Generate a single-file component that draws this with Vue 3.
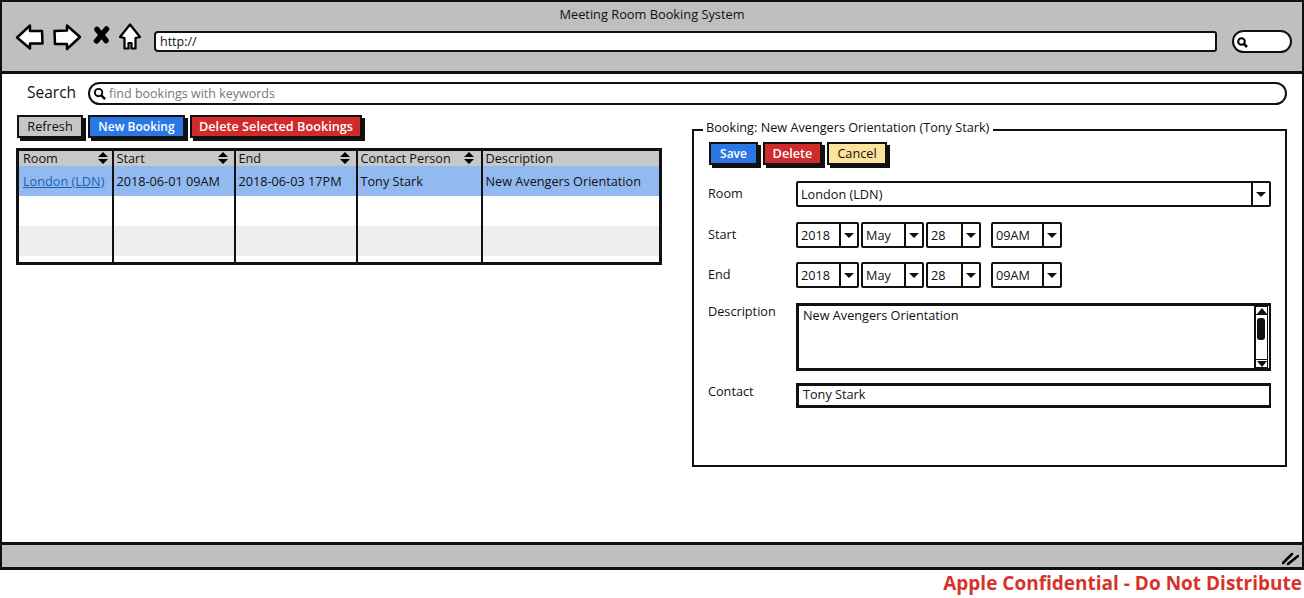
<script setup>
const columns = [
  { label: 'Room', sortable: true },
  { label: 'Start', sortable: true },
  { label: 'End', sortable: true },
  { label: 'Contact Person', sortable: true },
  { label: 'Description', sortable: false },
]

const dateRows = [
  { label: 'Start' },
  { label: 'End' },
]
</script>

<template>
  <div class="page">
    <div class="window">
      <header class="toolbar">
        <div class="title">Meeting Room Booking System</div>
        <div class="nav">
          <svg class="nav-icons" width="128" height="30" viewBox="14 23 128 30">
            <path d="M17 37.5 L30 25.5 L30 31 L42 31 L42.5 43.5 L30 43.5 L30 48.5 Z" fill="#fff" stroke="#000" stroke-width="2.5" stroke-linejoin="round" />
            <path d="M80 37 L67 25.5 L67 30.5 L54.5 31 L55 44 L67 44 L67 49 Z" fill="#fff" stroke="#000" stroke-width="2.5" stroke-linejoin="round" />
            <path d="M97 29.5 L106 40.5 M106.5 29 L96.5 41" fill="none" stroke="#000" stroke-width="5.5" stroke-linecap="round" />
            <path d="M130 24.5 L140 37 L135.5 38 L135.5 48.5 L131.5 48.5 L131.5 43 L128.5 43 L128.5 48.5 L124.5 48.5 L124.5 38 L120 37 Z" fill="#fff" stroke="#000" stroke-width="2.2" stroke-linejoin="round" />
          </svg>
          <div class="address">http://</div>
          <div class="browser-search">
            <svg width="11" height="11" viewBox="0 0 11 11">
              <circle cx="4.5" cy="4.5" r="3.3" fill="none" stroke="#000" stroke-width="2" />
              <path d="M7 7 L10 10" stroke="#000" stroke-width="2.5" />
            </svg>
          </div>
        </div>
      </header>

      <main class="content">
        <div class="search-row">
          <span class="search-label">Search</span>
          <div class="search-box">
            <svg width="13" height="13" viewBox="0 0 14 14">
              <circle cx="6" cy="6" r="4" fill="none" stroke="#000" stroke-width="2" />
              <path d="M9 9 L13 13" stroke="#000" stroke-width="2.5" />
            </svg>
            <span>find bookings with keywords</span>
          </div>
        </div>

        <div class="columns">
          <section class="list">
            <div class="buttons">
              <button class="btn btn-grey">Refresh</button>
              <button class="btn btn-blue">New Booking</button>
              <button class="btn btn-red">Delete Selected Bookings</button>
            </div>

            <table class="grid">
              <colgroup>
                <col style="width: 95px" />
                <col style="width: 122px" />
                <col style="width: 122px" />
                <col style="width: 125px" />
                <col />
              </colgroup>
              <thead>
                <tr>
                  <th v-for="col in columns" :key="col.label">
                    {{ col.label }}
                    <svg v-if="col.sortable" class="sort" width="10" height="12" viewBox="0 0 10 12">
                      <path d="M5 0 L10 5 L0 5 Z M0 7 L10 7 L5 12 Z" fill="#000" />
                    </svg>
                  </th>
                </tr>
              </thead>
              <tbody>
                <tr class="row-selected">
                  <td><a href="#" class="link">London (LDN)</a></td>
                  <td>2018-06-01 09AM</td>
                  <td>2018-06-03 17PM</td>
                  <td>Tony Stark</td>
                  <td>New Avengers Orientation</td>
                </tr>
                <tr class="row-empty">
                  <td></td><td></td><td></td><td></td><td></td>
                </tr>
                <tr class="row-empty row-alt">
                  <td></td><td></td><td></td><td></td><td></td>
                </tr>
                <tr class="row-tail">
                  <td></td><td></td><td></td><td></td><td></td>
                </tr>
              </tbody>
            </table>
          </section>

          <fieldset class="detail">
            <legend>Booking: New Avengers Orientation (Tony Stark)</legend>
            <div class="buttons detail-buttons">
              <button class="btn btn-blue btn-save">Save</button>
              <button class="btn btn-red btn-delete">Delete</button>
              <button class="btn btn-yellow">Cancel</button>
            </div>

            <div class="form">
              <label class="form-label">Room</label>
              <div class="select">
                <span class="select-value">London (LDN)</span>
                <span class="select-arrow"><i></i></span>
              </div>

              <template v-for="row in dateRows" :key="row.label">
                <label class="form-label">{{ row.label }}</label>
                <div class="date-row">
                  <div class="select w-year">
                    <span class="select-value">2018</span>
                    <span class="select-arrow"><i></i></span>
                  </div>
                  <div class="select w-month">
                    <span class="select-value">May</span>
                    <span class="select-arrow"><i></i></span>
                  </div>
                  <div class="select w-day">
                    <span class="select-value">28</span>
                    <span class="select-arrow"><i></i></span>
                  </div>
                  <div class="select w-hour">
                    <span class="select-value">09AM</span>
                    <span class="select-arrow"><i></i></span>
                  </div>
                </div>
              </template>

              <label class="form-label label-short">Description</label>
              <div class="textarea">
                <span class="textarea-text">New Avengers Orientation</span>
                <div class="scrollbar">
                  <span class="scroll-btn"><i class="up"></i></span>
                  <span class="scroll-track"><b></b></span>
                  <span class="scroll-btn"><i></i></span>
                </div>
              </div>

              <label class="form-label label-short">Contact</label>
              <div class="text-input">Tony Stark</div>
            </div>
          </fieldset>
        </div>
      </main>

      <footer class="statusbar">
        <svg width="17" height="14" viewBox="0 0 17 14">
          <path d="M1 11 L10 2 M6 12 L16 4" stroke="#000" stroke-width="2.5" stroke-linecap="round" />
        </svg>
      </footer>
    </div>
    <div class="confidential">Apple Confidential - Do Not Distribute</div>
  </div>
</template>

<style>
html,
body {
  margin: 0;
  background: #fff;
}
</style>

<style scoped>
.page {
  width: 1304px;
  height: 598px;
  overflow: hidden;
  font-family: 'Open Sans', 'Liberation Sans', sans-serif;
  font-size: 12.7px;
  color: #111;
  background: #fff;
}

.window {
  box-sizing: border-box;
  height: 570px;
  border: 2px solid #111;
  border-bottom-width: 3px;
  display: flex;
  flex-direction: column;
}

.toolbar {
  height: 69px;
  flex: none;
  background: #bfbfbf;
  border-bottom: 3px solid #111;
  box-sizing: content-box;
}

.title {
  height: 24px;
  line-height: 24px;
  text-align: center;
  font-size: 12.8px;
}

.nav {
  display: flex;
  align-items: center;
  height: 30px;
  padding-left: 12px;
}

.nav-icons {
  flex: none;
  margin-top: -6px;
}

.address {
  box-sizing: border-box;
  width: 1063px;
  height: 21px;
  margin-left: 12px;
  padding-left: 4px;
  line-height: 17px;
  background: #fff;
  border: 2px solid #111;
  border-radius: 4px 3px 3px 4px;
  font-size: 12.5px;
}

.browser-search {
  box-sizing: border-box;
  width: 60px;
  height: 23px;
  margin-left: 15px;
  padding: 5px 0 0 3px;
  background: #fff;
  border: 2px solid #111;
  border-radius: 12px;
}

.browser-search svg {
  display: block;
}

.content {
  flex: 1;
  min-height: 0;
  display: flex;
  flex-direction: column;
  background: #fff;
}

.search-row {
  display: flex;
  align-items: center;
  height: 23px;
  margin-top: 8px;
  padding: 0 15px 0 25px;
}

.search-label {
  width: 61px;
  margin-bottom: 3px;
  font-size: 15.5px;
}

.search-box {
  flex: 1;
  box-sizing: border-box;
  height: 23px;
  display: flex;
  align-items: center;
  gap: 3px;
  padding-left: 3px;
  background: #fff;
  border: 2px solid #111;
  border-radius: 12px;
  color: #777;
  font-size: 12.5px;
}

.columns {
  display: flex;
  justify-content: space-between;
  padding: 10px 15px 0 15px;
  flex: 1;
  min-height: 0;
}

.list {
  width: 645px;
  flex: none;
}

.buttons {
  display: flex;
  gap: 5px;
}

.btn {
  box-sizing: border-box;
  height: 23px;
  padding: 0 0 1px;
  border: 2px solid #111;
  box-shadow: 3px 3px 0 #111;
  font: inherit;
  line-height: 16px;
  color: #111;
  text-align: center;
}

.btn-grey {
  width: 66px;
  background: #c6c6c6;
}

.btn-blue {
  width: 97px;
  padding: 1px 0 0;
  background: #2b78e4;
  color: #fff;
  font-size: 12px;
  font-weight: 600;
}

.btn-red {
  width: 172px;
  background: #d12a2a;
  color: #fff;
  font-weight: 600;
}

.btn-yellow {
  width: 60px;
  background: #fde29b;
}

.grid {
  width: 646px;
  margin: 10px 0 0 -1px;
  border-collapse: collapse;
  table-layout: fixed;
  border: 3px solid #111;
}

.grid th {
  position: relative;
  height: 15px;
  padding: 0 0 0 3px;
  background: #c8c8c8;
  font-weight: 400;
  line-height: 15px;
  text-align: left;
  border-left: 2px solid #111;
}

.grid td {
  padding: 0 0 0 3px;
  border-left: 2px solid #111;
}

.grid th:first-child,
.grid td:first-child {
  padding-left: 4px;
}

.sort {
  position: absolute;
  top: 1px;
  right: 6px;
}

.grid th:first-child .sort {
  right: 4px;
}

.grid th:nth-child(4) .sort {
  right: 7px;
}

.row-selected td {
  height: 30px;
  background: #92baf0;
}

.row-empty td {
  height: 30px;
}

.row-alt td {
  background: #eee;
}

.row-tail td {
  height: 6px;
}

.link {
  color: #1a5fb4;
}

.detail {
  box-sizing: border-box;
  width: 595px;
  height: 348px;
  margin: 4px 0 0;
  padding: 0 15px 0 14px;
  border: 2px solid #111;
  min-width: 0;
}

.detail legend {
  margin-left: -5px;
  padding: 0 4px 6px 3px;
  line-height: 16px;
}

.detail-buttons {
  margin-top: 1px;
  padding-left: 1px;
}

.detail-buttons .btn-save {
  width: 49px;
}

.detail-buttons .btn-delete {
  width: 59px;
}

.form {
  display: grid;
  grid-template-columns: 88px 475px;
  grid-template-rows: 41px 40px 41px 80px 25px;
  align-items: start;
  margin-top: 16px;
}

.form-label {
  line-height: 24px;
}

.label-short {
  line-height: 16px;
}

.select {
  box-sizing: border-box;
  display: flex;
  height: 26px;
  background: #fff;
  border: 2px solid #111;
  border-radius: 2px;
}

.select-value {
  flex: 1;
  padding-left: 3px;
  line-height: 22px;
}

.select-arrow {
  width: 16px;
  flex: none;
  display: flex;
  align-items: center;
  justify-content: center;
  border-left: 2px solid #111;
}

.select-arrow i {
  width: 0;
  height: 0;
  border-left: 5px solid transparent;
  border-right: 5px solid transparent;
  border-top: 5px solid #111;
}

.date-row {
  display: flex;
  gap: 2px;
}

.w-year,
.w-month {
  width: 63px;
}

.w-day {
  width: 55px;
}

.w-hour {
  width: 71px;
  margin-left: 8px;
}

.textarea {
  box-sizing: border-box;
  height: 68px;
  display: flex;
  justify-content: space-between;
  padding: 0 1px 0 4px;
  border: 3px solid #111;
  border-right-width: 2px;
  line-height: 16px;
}

.textarea-text {
  padding-top: 1px;
}

.scrollbar {
  box-sizing: border-box;
  width: 14px;
  display: flex;
  flex-direction: column;
  border-style: solid;
  border-color: #111;
  border-width: 0 1px 0 2px;
}

.scroll-btn {
  box-sizing: border-box;
  height: 9px;
  flex: none;
  display: flex;
  align-items: center;
  justify-content: center;
  border-style: solid;
  border-color: #111;
  border-width: 1px 0;
}

.scroll-btn i {
  width: 0;
  height: 0;
  border-left: 5px solid transparent;
  border-right: 5px solid transparent;
  border-top: 6px solid #111;
}

.scroll-btn i.up {
  border-top: 0;
  border-bottom: 6px solid #111;
}

.scroll-track {
  flex: 1;
  padding: 3px 1px;
  display: flex;
}

.scroll-track b {
  display: block;
  width: 8px;
  height: 22px;
  background: #111;
  border-radius: 3px;
}

.text-input {
  box-sizing: border-box;
  height: 25px;
  padding-left: 4px;
  line-height: 17px;
  border: 3px solid #111;
  border-right-width: 2px;
}

.statusbar {
  box-sizing: border-box;
  height: 25px;
  flex: none;
  display: flex;
  align-items: flex-end;
  justify-content: flex-end;
  padding: 0 3px 1px 0;
  background: #bfbfbf;
  border-top: 3px solid #111;
}

.confidential {
  height: 26px;
  padding-right: 2px;
  line-height: 26px;
  text-align: right;
  color: #d8332a;
  font-size: 19px;
  font-weight: 700;
}
</style>
